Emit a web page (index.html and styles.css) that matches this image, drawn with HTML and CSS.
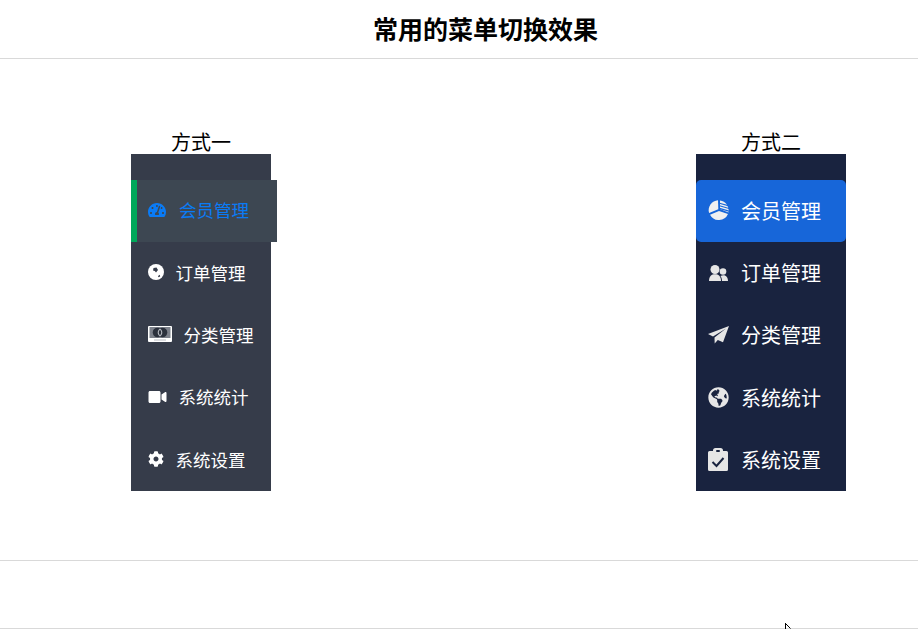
FILE: index.html
```html
<!DOCTYPE html>
<html lang="zh-CN">
<head>
<meta charset="utf-8">
<title>常用的菜单切换效果</title>
<link rel="stylesheet" href="styles.css">
</head>
<body>
<header class="page-header"><h1 class="page-title">常用的菜单切换效果</h1></header>
<main class="stage">
  <section class="demo demo-one">
    <h2 class="demo-label">方式一</h2>
    <ul class="menu menu-one">
      <li class="item active"><svg class="ic" width="18" height="16" viewBox="0 0 576 512"><path d="M288 32C128.94 32 0 160.94 0 320c0 52.8 14.25 102.26 39.06 144.8 5.61 9.62 16.3 15.2 27.44 15.2h443c11.14 0 21.83-5.58 27.44-15.2C561.75 422.26 576 372.8 576 320c0-159.06-128.94-288-288-288zm0 64c14.71 0 26.58 10.13 30.32 23.65-1.11 2.26-2.64 4.23-3.45 6.67l-9.22 27.67c-5.13 3.49-10.97 6.01-17.64 6.01-17.67 0-32-14.33-32-32S270.33 96 288 96zM96 384c-17.67 0-32-14.33-32-32s14.33-32 32-32 32 14.33 32 32-14.33 32-32 32zm48-160c-17.67 0-32-14.33-32-32s14.33-32 32-32 32 14.33 32 32-14.33 32-32 32zm246.77-72.41l-61.33 184C343.13 347.33 352 364.54 352 384c0 11.72-3.38 22.55-8.88 32H232.88c-5.5-9.45-8.88-20.28-8.88-32 0-33.94 26.5-61.43 59.9-63.59l61.34-184.01c4.17-12.56 17.73-19.45 30.36-15.17 12.57 4.19 19.35 17.79 15.17 30.36zm14.66 57.2l15.52-46.55c3.47-1.29 7.13-2.23 11.05-2.23 17.67 0 32 14.33 32 32s-14.33 32-32 32c-11.38-.01-20.89-6.28-26.57-15.22zM480 384c-17.67 0-32-14.33-32-32s14.33-32 32-32 32 14.33 32 32-14.33 32-32 32z"/></svg><span>会员管理</span></li>
      <li class="item"><svg class="ic" width="16" height="16" viewBox="0 0 16 16"><circle cx="8" cy="8" r="8"/><path class="cut" d="M5.500 4 8.500 3.500l1.500 2.500L8 8.500 6.800 7 5 6.500zM10 12l1.800-1.300.4 1.700-1.800.8z"/></svg><span>订单管理</span></li>
      <li class="item"><svg class="ic ic-card" width="24" height="16" viewBox="0 0 24 16"><rect width="24" height="16" rx="1"/><rect class="panel" x="1.500" y="1" width="21" height="11"/><circle class="disc" cx="9.500" cy="6.500" r="4.800"/><circle class="disc" cx="14.500" cy="6.500" r="4.800"/><path class="lens" d="M12 2.400a4.800 4.800 0 0 1 0 8.200 4.800 4.800 0 0 1 0-8.200z"/><path class="lens-in" d="M12 3.800a3.600 3.600 0 0 1 0 5.400 3.600 3.600 0 0 1 0-5.400z"/><rect class="strip" x="6" y="13.500" width="12" height="1"/></svg><span>分类管理</span></li>
      <li class="item"><svg class="ic" width="19" height="16" viewBox="0 0 576 512"><path d="M336.2 64H47.8C21.4 64 0 85.4 0 111.8v288.4C0 426.6 21.4 448 47.8 448h288.4c26.4 0 47.8-21.4 47.8-47.8V111.8c0-26.4-21.4-47.8-47.8-47.8zm189.4 37.7L416 177.3v157.4l109.6 75.5c21.2 14.6 50.4-.3 50.4-25.8V127.5c0-25.4-29.1-40.4-50.4-25.8z"/></svg><span>系统统计</span></li>
      <li class="item"><svg class="ic" width="16" height="16" viewBox="0 0 512 512"><path d="M487.4 315.7l-42.6-24.6c4.3-23.2 4.3-47 0-70.2l42.6-24.6c4.9-2.8 7.1-8.6 5.5-14-11.1-35.6-30-67.8-54.7-94.6-3.8-4.1-10-5.1-14.8-2.3L380.8 110c-17.9-15.4-38.5-27.3-60.8-35.1V25.8c0-5.6-3.9-10.5-9.4-11.7-36.7-8.2-74.3-7.8-109.2 0-5.5 1.2-9.4 6.1-9.4 11.7V75c-22.2 7.9-42.8 19.8-60.8 35.1L88.7 85.5c-4.9-2.8-11-1.9-14.8 2.3-24.7 26.7-43.6 58.9-54.7 94.6-1.7 5.4.6 11.2 5.5 14L67.3 221c-4.3 23.2-4.3 47 0 70.2l-42.6 24.6c-4.9 2.8-7.1 8.6-5.5 14 11.1 35.6 30 67.8 54.7 94.6 3.8 4.1 10 5.1 14.8 2.3l42.6-24.6c17.9 15.4 38.5 27.3 60.8 35.1v49.2c0 5.6 3.9 10.5 9.4 11.7 36.7 8.2 74.3 7.8 109.2 0 5.5-1.2 9.4-6.1 9.4-11.7v-49.2c22.2-7.9 42.8-19.8 60.8-35.1l42.6 24.6c4.9 2.8 11 1.9 14.8-2.3 24.7-26.7 43.6-58.9 54.7-94.6 1.5-5.5-.7-11.3-5.6-14.1zM256 336c-44.1 0-80-35.9-80-80s35.9-80 80-80 80 35.9 80 80-35.9 80-80 80z"/></svg><span>系统设置</span></li>
    </ul>
  </section>
  <section class="demo demo-two">
    <h2 class="demo-label">方式二</h2>
    <ul class="menu menu-two">
      <li class="item active"><svg class="ic" width="21" height="20" viewBox="-0.5 0 21 20"><path d="M9.500.2A10 10 0 0 0 .6 13L9.800 9.200z"/><path d="M1.500 14.700 10.500 11l9 3A10 10 0 0 1 1.500 14.700z"/><path d="M11.500 0.500A10 10 0 0 1 20 12.500L11.500 9z"/><path class="stripes" d="M11 3.200 21 6M11 5.800 21 8.600M11 8.400 21 11.200"/></svg><span>会员管理</span></li>
      <li class="item"><svg class="ic" width="21" height="16" viewBox="-1 0 21 16"><circle cx="6" cy="4.500" r="4.500"/><circle cx="14" cy="6.500" r="3.300"/><path d="M0 16c0-5 2.600-6.800 6-6.800s6 1.800 6 6.800z"/><path d="M13 16c0-2-.5-4-1.600-5 1-.5 2-.7 3-.7 3 0 4.600 2.700 4.600 5.700z"/></svg><span>订单管理</span></li>
      <li class="item"><svg class="ic" width="21" height="18" viewBox="0 0 21 18"><path d="M21 0 0 8l5 2.600L18 2.500 6.500 11.500l.2 6L9.800 14l5.200 2.200z"/></svg><span>分类管理</span></li>
      <li class="item"><svg class="ic" width="21" height="21" viewBox="0 0 496 512"><path d="M248 8C111.03 8 0 119.03 0 256s111.03 248 248 248 248-111.03 248-248S384.97 8 248 8zm82.29 357.6c-3.9 3.88-7.99 7.95-11.31 11.28-2.99 3-5.1 6.7-6.17 10.71-1.51 5.66-2.73 11.38-4.77 16.87l-17.39 46.85c-13.76 3-28 4.69-42.65 4.69v-27.38c1.69-12.62-7.64-36.26-22.63-51.25-6-6-9.37-14.14-9.37-22.63v-32.01c0-11.64-6.27-22.34-16.46-27.97-14.37-7.95-34.81-19.06-48.81-26.11-11.48-5.78-22.1-13.14-31.65-21.75l-.8-.72a114.792 114.792 0 0 1-18.06-20.74c-9.38-13.77-24.66-36.42-34.59-51.14 20.47-45.5 57.36-82.04 103.2-101.89l24.01 12.01C203.48 89.74 216 82.01 216 70.11v-11.3c7.99-1.29 16.12-2.11 24.39-2.42l28.3 28.3c6.25 6.25 6.25 16.38 0 22.63L264 112l-10.34 10.34c-3.12 3.12-3.12 8.19 0 11.31l4.69 4.69c3.12 3.12 3.12 8.19 0 11.31l-8 8a8.008 8.008 0 0 1-5.66 2.34h-8.99c-2.08 0-4.08.81-5.58 2.27l-9.92 9.65a8.008 8.008 0 0 0-1.58 9.31l15.59 31.19c2.66 5.32-1.21 11.58-7.15 11.58h-5.64c-1.93 0-3.79-.7-5.24-1.96l-9.28-8.06a16.017 16.017 0 0 0-15.55-3.1l-31.17 10.39a11.95 11.95 0 0 0-8.17 11.34c0 4.53 2.56 8.66 6.61 10.69l11.08 5.54c9.41 4.71 19.79 7.16 30.31 7.16s22.59 27.29 32 32h66.75c8.49 0 16.62 3.37 22.63 9.37l13.69 13.69a30.503 30.503 0 0 1 8.93 21.57 46.536 46.536 0 0 1-13.72 32.98zM417 274.25c-5.79-1.45-10.84-5-14.15-9.97l-17.98-26.97a23.97 23.97 0 0 1 0-26.62l19.59-29.38c2.32-3.47 5.5-6.29 9.24-8.15l12.98-6.49C440.2 193.59 448 223.87 448 256c0 8.67-.74 17.16-1.82 25.54L417 274.25z"/></svg><span>系统统计</span></li>
      <li class="item"><svg class="ic" width="21" height="23" viewBox="0 0 21 23"><path d="M1.500 3H5V2.500A2.500 2.500 0 0 1 7.500 0h5A2.500 2.500 0 0 1 15 2.500V3h3.500A1.500 1.500 0 0 1 20 4.500v17a1.500 1.500 0 0 1-1.500 1.500h-17A1.500 1.500 0 0 1 0 21.500v-17A1.500 1.500 0 0 1 1.500 3z"/><rect class="hole" x="8" y="2" width="4" height="2" rx="1"/><path class="tick" d="M4.500 14l4 4 7-8"/></svg><span>系统设置</span></li>
    </ul>
  </section>
</main>
<footer class="page-footer"></footer>
<svg class="cursor" width="8" height="6" viewBox="0 0 8 6"><path d="M.5 0v6M.5.5l5 5"/></svg>
</body>
</html>
```
FILE: styles.css
```css
* { box-sizing: border-box; }
html, body { margin: 0; padding: 0; }
body {
  position: relative;
  height: 629px;
  overflow: hidden;
  background: #fff;
  color: #000;
  font-family: "Liberation Sans", "Noto Sans CJK SC", sans-serif;
}
.page-header {
  height: 59px;
  border-bottom: 1px solid #d9d9d9;
  padding: 14px 0 0 53px;
  text-align: center;
}
.page-title {
  margin: 0;
  font-size: 25px;
  line-height: 33px;
  font-weight: 700;
}
.stage {
  height: 502px;
  border-bottom: 1px solid #d9d9d9;
  padding: 72px 72px 0 131px;
  display: flex;
  justify-content: space-between;
  align-items: flex-start;
}
.demo-label {
  margin: 0;
  height: 23px;
  font-size: 20px;
  line-height: 24px;
  font-weight: 400;
  text-align: center;
}
.menu {
  margin: 0;
  padding: 26px 0 0;
  list-style: none;
  height: 337px;
  color: #fff;
}
.item {
  height: 62.4px;
  display: flex;
  align-items: center;
}
.ic { flex: none; fill: currentColor; display: block; }
.menu-one { width: 140px; background: #363c4a; font-size: 17.5px; }
.menu-one .item { padding: 0 0 3px 17px; gap: 11.5px; }
.menu-one .active {
  width: 146px;
  background: #3d4752;
  border-left: 6px solid #00a85a;
  padding-left: 11px;
  gap: 13px;
  color: #0a7bf5;
}
.menu-one .cut { fill: #363c4a; }
.menu-one .panel { fill: #7d818b; }
.menu-one .disc { fill: #2b303c; }
.menu-one .lens { fill: #b5b8bf; }
.menu-one .lens-in { fill: #2b303c; }
.menu-one .strip { fill: #b9bcc3; }
.ic-card { margin-bottom: 1px; }
.menu-two { width: 150px; background: #19233f; font-size: 20px; }
.menu-two .item { padding: 0 0 2px 12px; gap: 12px; }
.menu-two .ic { color: #e6e6e6; }
.menu-two .active { background: #1766d9; border-radius: 5px; }
.menu-two .active .ic { color: #f0f0f0; }
.menu-two .stripes { fill: none; stroke: #1766d9; stroke-width: 1.1; }
.menu-two .hole { fill: #19233f; }
.menu-two .tick { fill: none; stroke: #19233f; stroke-width: 2; }
.page-footer {
  height: 68px;
  border-bottom: 1px solid #d9d9d9;
}
.cursor {
  position: absolute;
  left: 785px;
  top: 623px;
  fill: none;
  stroke: #000;
}
```
